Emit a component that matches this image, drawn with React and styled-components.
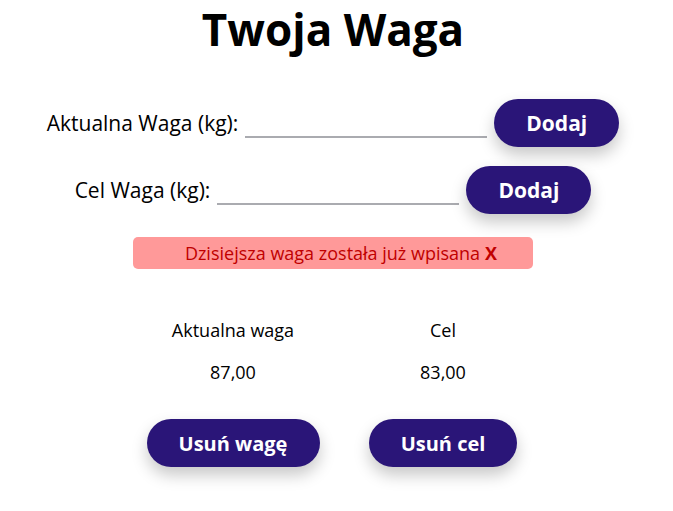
import React from "react";
import styled, { createGlobalStyle } from "styled-components";

const Global = createGlobalStyle`
  html, body { margin: 0; padding: 0; background: #fff; }
  body { font-family: "Open Sans", "Noto Sans", sans-serif; color: #000; }
`;

const Page = styled.div`
  display: flex;
  flex-direction: column;
  align-items: center;
  padding-right: 7px;
  padding-bottom: 40px;
`;

const Title = styled.h1`
  margin: 0;
  padding-top: 3px;
  font-size: 44px;
  font-weight: 700;
  line-height: 52px;
`;

const Form = styled.div`
  margin-top: 44px;
  display: flex;
  flex-direction: column;
  align-items: center;
  gap: 19px;
`;

const Row = styled.div`
  display: flex;
  align-items: baseline;
  gap: 7px;
`;

const Label = styled.label`
  font-size: 21px;
`;

const Input = styled.input`
  width: 242px;
  box-sizing: border-box;
  border: none;
  border-bottom: 2px solid #aaabb0;
  font-family: inherit;
  font-size: 18px;
  padding: 0 2px;
  outline: none;
  background: transparent;
`;

const Button = styled.button`
  width: ${(p) => p.$w || 125}px;
  height: 48px;
  border: none;
  border-radius: 24px;
  background: #2a1578;
  color: #fff;
  font-family: inherit;
  font-weight: 700;
  font-size: ${(p) => p.$fs || 20}px;
  box-shadow: 0 8px 16px rgba(0, 0, 0, 0.22);
  cursor: pointer;
`;

const Alert = styled.div`
  margin-top: 23px;
  width: 400px;
  height: 32px;
  box-sizing: border-box;
  background: #ff9999;
  color: #c00000;
  border-radius: 5px;
  font-size: 18px;
  display: flex;
  align-items: center;
  justify-content: center;
  padding-left: 16px;
  b { margin-left: 5px; }
`;

const Stats = styled.div`
  margin-top: 49px;
  display: grid;
  grid-template-columns: 210px 210px;
  justify-items: center;
  padding-left: 10px;
`;

const Cell = styled.div`
  font-size: 18px;
  line-height: 24px;
  margin-bottom: ${(p) => p.$mb || 0}px;
`;

const App = () => (
  <>
    <Global />
    <Page>
      <Title>Twoja Waga</Title>
      <Form>
        <Row>
          <Label>Aktualna Waga (kg):</Label>
          <Input type="text" />
          <Button $fs={21}>Dodaj</Button>
        </Row>
        <Row>
          <Label>Cel Waga (kg):</Label>
          <Input type="text" />
          <Button $fs={21}>Dodaj</Button>
        </Row>
      </Form>
      <Alert>
        Dzisiejsza waga została już wpisana <b>X</b>
      </Alert>
      <Stats>
        <Cell $mb={18}>Aktualna waga</Cell>
        <Cell $mb={18}>Cel</Cell>
        <Cell $mb={35}>87,00</Cell>
        <Cell $mb={35}>83,00</Cell>
        <Button $w={173}>Usuń wagę</Button>
        <Button $w={148}>Usuń cel</Button>
      </Stats>
    </Page>
  </>
);

export default App;
